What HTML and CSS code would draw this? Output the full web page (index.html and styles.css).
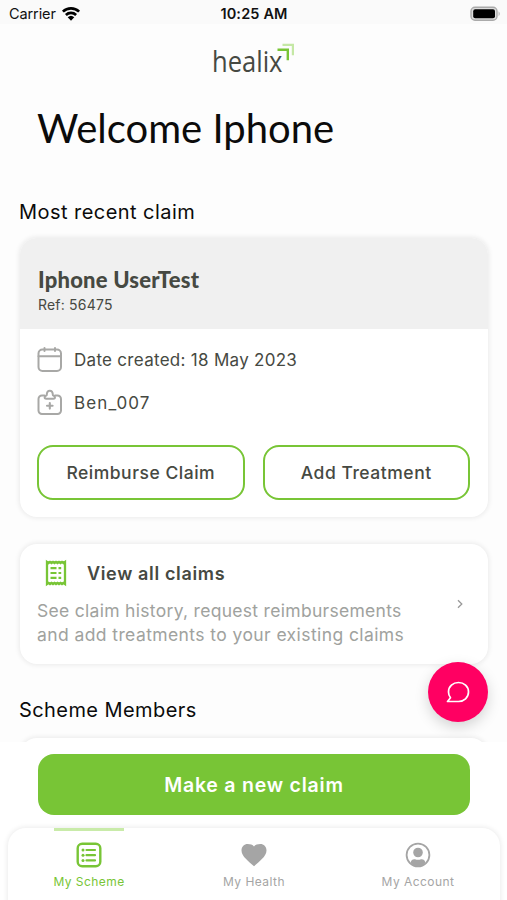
FILE: index.html
```html
<!DOCTYPE html>
<html lang="en">
<head>
<meta charset="utf-8">
<title>Healix</title>
<link rel="stylesheet" href="styles.css">
</head>
<body>
<div class="screen">
  <div class="status">
    <div class="carrier"><span>Carrier</span>
      <svg width="20" height="16" viewBox="0 0 20 16"><g fill="none" stroke="#000" stroke-width="2.7"><path d="M1.9 5.6a11.6 11.6 0 0 1 16.2 0"/><path d="M4.9 9a7.4 7.4 0 0 1 10.2 0"/></g><path d="M6.7 11.2a4.8 4.8 0 0 1 6.6 0L10 14.8z"/></svg>
    </div>
    <span class="time">10:25 AM</span>
    <svg class="battery" width="32" height="16" viewBox="0 0 32 16"><rect x="1" y="1.2" width="26" height="13" rx="4" fill="#ddd" stroke="#aaa" stroke-width="1.4"/><rect x="3.2" y="3.3" width="21.8" height="9" rx="2" fill="#000"/><path d="M28.6 5.2q2.2 2.500 0 5z" fill="#aaa"/></svg>
  </div>
  <main class="content">
    <svg class="logo" width="84" height="42" viewBox="0 0 84 42"><text class="wordmark" x="-1" y="30.500" textLength="70.500" lengthAdjust="spacingAndGlyphs">healix</text><path d="M64.500 8.800h10.300v10.500" fill="none" stroke="#78c536" stroke-width="2.400"/><path d="M69.500 3.800h10.400v10.400" fill="none" stroke="#c5e8a5" stroke-width="2.200"/></svg>
    <h1>Welcome Iphone</h1>
    <h2 class="recent-title">Most recent claim</h2>
    <section class="card claim">
      <header class="claim-head">
        <h3>Iphone UserTest</h3>
        <p class="ref">Ref: 56475</p>
      </header>
      <div class="row">
        <svg width="26" height="26" viewBox="0 0 26 26" fill="none" stroke="#a8a8a6" stroke-width="2" stroke-linecap="round"><rect x="1.500" y="2.500" width="22.500" height="21.500" rx="4"/><path d="M1.500 9.300H24M7.500.9v3.200M18 .9v3.200"/></svg>
        <span class="date">Date created: 18 May 2023</span>
      </div>
      <div class="row">
        <svg width="26" height="26" viewBox="0 0 26 26" fill="none" stroke="#a8a8a6" stroke-width="2" stroke-linecap="round" stroke-linejoin="round"><path d="M7.500 5.500H5A3.500 3.500 0 0 0 1.500 9v11.500A3.500 3.500 0 0 0 5 24h15.500a3.500 3.500 0 0 0 3.500-3.500V9a3.500 3.500 0 0 0-3.500-3.500H18"/><path d="M9.300 8.700h7q2 0 1.600-1.700-.4-1.300-2-1.800Q15.700.8 12.800.8T9.700 5.200q-1.600.5-2 1.800-.4 1.700 1.600 1.700z"/><path d="M12.800 13v5.600M10 15.800h5.600" stroke-width="2.100"/></svg>
        <span class="member">Ben_007</span>
      </div>
      <div class="actions">
        <button class="outline">Reimburse Claim</button>
        <button class="outline">Add Treatment</button>
      </div>
    </section>
    <section class="card all">
      <div class="all-text">
        <div class="all-title">
          <svg width="22" height="26" viewBox="0 0 22 26"><path d="M2 2l1.500 1 1.500-1 1.500 1L8 2l1.500 1L11 2l1.500 1L14 2l1.500 1L17 2l1.500 1L20 2v22l-1.500-1-1.500 1-1.500-1-1.500 1-1.500-1-1.500 1-1.500-1L8 24l-1.500-1L5 24l-1.500-1L2 24z" fill="none" stroke="#78c536" stroke-width="2.300"/><path d="M5.500 8.200h6M5.500 13h6M5.500 17.800h6M13.500 8.200h2.700M13.500 13h2.700M13.500 17.800h2.700" stroke="#78c536" stroke-width="2.200"/></svg>
          <span>View all claims</span>
        </div>
        <p class="desc">See claim history, request reimbursements<br><span class="second">and add treatments to your existing claims</span></p>
      </div>
      <svg class="chevron" width="8" height="10" viewBox="0 0 8 10"><path d="M2 1.300L5.800 5 2 8.700" fill="none" stroke="#999" stroke-width="1.300"/></svg>
    </section>
    <h2 class="members-title">Scheme Members</h2>
    <section class="card members"></section>
  </main>
  <footer class="bottom">
    <button class="primary">Make a new claim</button>
    <nav class="tabs">
      <a class="tab active"><svg width="26" height="26" viewBox="0 0 26 26"><rect x="1.700" y="1.700" width="22.600" height="22.600" rx="4.500" fill="none" stroke="#78c536" stroke-width="2.400"/><path d="M10.500 8h8.500M10.500 13.200h8.500M10.500 18.400h8.500" stroke="#78c536" stroke-width="2.200" stroke-linecap="round"/><g fill="#78c536"><circle cx="7" cy="8" r="1.500"/><circle cx="7" cy="13.200" r="1.500"/><circle cx="7" cy="18.400" r="1.500"/></g></svg><span>My Scheme</span></a>
      <a class="tab"><svg width="26" height="26" viewBox="0 0 26 26"><path d="M13 24.200C8 19.600.5 14.500.5 8.500.5 4.500 3.300 2 6.700 2 9.300 2 11.700 2.700 13 4.500 14.300 2.700 16.700 2 19.300 2c3.400 0 6.200 2.500 6.200 6.500 0 6-7.500 11.100-12.500 15.700z" fill="#a5a5a5"/></svg><span>My Health</span></a>
      <a class="tab"><svg width="26" height="26" viewBox="0 0 26 26"><circle cx="13" cy="13" r="11.400" fill="none" stroke="#a5a5a5" stroke-width="1.800"/><circle cx="13" cy="10.500" r="4.800" fill="#a5a5a5"/><path d="M5.500 20.500q1-3.700 4.500-3.300 3 1 6 0 3.500-.4 4.500 3.300Q17.500 24.500 13 24.500t-7.500-4z" fill="#a5a5a5"/></svg><span>My Account</span></a>
    </nav>
  </footer>
  <button class="chat" aria-label="Chat"><svg width="24" height="22" viewBox="0 0 24 22"><path d="M1.500 20.500h11c5.500 0 10-4 10-9.500S18 1.500 12.500 1.500 2.500 5.500 2.500 11c0 2.200.7 4.200 2 5.800z" fill="none" stroke="#fff" stroke-width="1.700" stroke-linejoin="round"/></svg></button>
</div>
</body>
</html>
```
FILE: styles.css
```css
* { box-sizing: border-box; margin: 0; padding: 0; }
body { font-family: Inter, sans-serif; color: #464942; background: #fdfdfd; }
svg { display: block; flex: none; overflow: visible; }
button { font: inherit; color: inherit; border: 0; background: none; }
span, button, .desc { white-space: nowrap; }
.screen { position: relative; width: 507px; height: 900px; overflow: hidden; display: flex; flex-direction: column; }
.status { height: 24px; flex: none; display: grid; grid-template-columns: 1fr auto 1fr; align-items: center; padding: 3px 5px 0 9px; background: #fafafa; font-size: 14.5px; color: #111; }
.carrier { display: flex; gap: 6px; align-items: center; letter-spacing: -.1px; }
.carrier svg { margin-left: -1px; }
.time { font-weight: 600; letter-spacing: .15px; margin-left: -3px; }
.battery { justify-self: end; }
.content { flex: 1; min-height: 0; overflow: hidden; padding: 0 19px 0 20px; display: flex; flex-direction: column; }
.content > * { flex: none; }
.logo { margin: 17px 0 0 193px; }
.wordmark { font: 500 30px "Open Sans", sans-serif; fill: #464942; }
h1 { margin: 20px 0 0 17px; font: 400 40px/50px Lato, sans-serif; color: #0b0b0b; white-space: nowrap; }
h2 { margin-left: -1px; font-size: 20px; line-height: 30px; font-weight: 400; color: #0b0b0b; }
.recent-title { margin-top: 44px; letter-spacing: .45px; }
.card { background: #fff; border-radius: 17px; box-shadow: 0 0 5px 1px rgba(0,0,0,.08); }
.claim { margin-top: 11px; height: 279px; overflow: hidden; }
.claim-head { height: 91px; padding: 28px 18px 0; background: #f0f0f0; margin-bottom: 9px; }
h3 { font: 900 22px/28px Lato, sans-serif; letter-spacing: .2px; }
.ref { font-size: 14px; line-height: 22px; letter-spacing: .2px; }
.row { display: flex; align-items: center; gap: 11px; height: 43px; padding-left: 17px; font-size: 17px; }
.date { letter-spacing: .29px; }
.member { letter-spacing: 1.1px; }
.actions { display: grid; grid-template-columns: 1fr 1fr; gap: 18px; padding: 21px 18px 0 17px; }
.outline { height: 55px; border: 2px solid #78c536; border-radius: 16px; font-size: 17.5px; font-weight: 500; letter-spacing: .52px; }
.all { margin-top: 27px; height: 120px; display: flex; justify-content: space-between; padding: 14px 24px 0 17px; }
.all-title { display: flex; align-items: center; gap: 20px; padding-left: 8px; height: 30px; font-size: 18px; font-weight: 600; letter-spacing: .65px; }
.desc { margin-top: 11px; font-size: 17.5px; line-height: 24px; color: #a0a29e; letter-spacing: .3px; }
.second { letter-spacing: .41px; }
.chevron { margin-top: 41px; }
.members-title { margin-top: 31px; letter-spacing: .42px; }
.members { margin-top: 13px; height: 120px; }
.bottom { height: 158px; flex: none; background: #fff; padding: 12px 7px 0 8px; }
.primary { display: block; width: 432px; height: 61px; margin-left: 30px; border-radius: 16px; background: #78c536; color: #fff; font-size: 19.5px; font-weight: 600; letter-spacing: .78px; }
.tabs { display: grid; grid-template-columns: repeat(3, 1fr); margin-top: 13px; height: 90px; border-radius: 18px 18px 0 0; box-shadow: 0 0 5px 1px rgba(0,0,0,.08); background: #fff; }
.tab { display: flex; flex-direction: column; align-items: center; padding-top: 14px; gap: 5px; font-size: 12px; line-height: 18px; letter-spacing: .45px; color: #a5a5a5; }
.active { padding-right: 2px; color: #78c536; background: linear-gradient(#c9eba9, #c9eba9) 46px 0 / 70px 3px no-repeat; }
.chat { position: absolute; left: 428px; top: 662px; width: 60px; height: 60px; border-radius: 50%; background: #ff0062; box-shadow: 0 5px 14px rgba(0,0,0,.17); display: flex; align-items: center; justify-content: center; }
```
